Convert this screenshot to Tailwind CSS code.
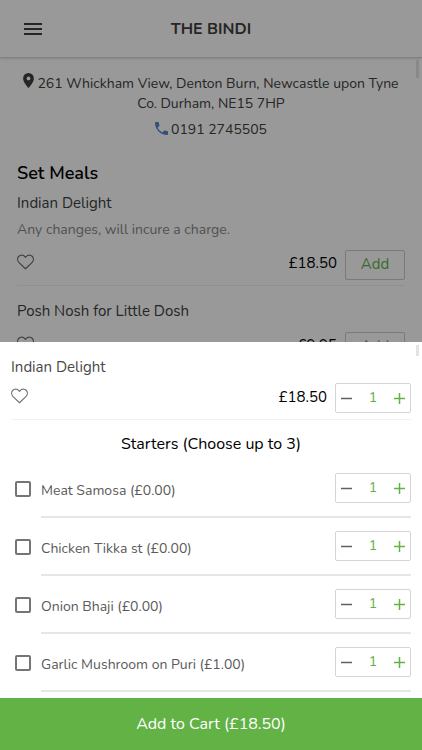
<!DOCTYPE html>
<html lang="en">
<head>
<meta charset="utf-8">
<meta name="viewport" content="width=device-width, initial-scale=1">
<title>The Bindi</title>
<script src="https://cdn.jsdelivr.net/npm/@tailwindcss/browser@4"></script>
</head>
<body class="bg-white">
<svg class="hidden" aria-hidden="true">
  <symbol id="heart" viewBox="0 0 18 16"><path d="M9 15.200 2.200 8.600C.3 6.700.2 3.900 1.700 2.200 3.500.2 6.700.2 8.300 2.200L9 3.100 9.700 2.200C11.300.2 14.500.2 16.300 2.200 17.800 3.900 17.700 6.700 15.800 8.600Z" fill="none" stroke="currentColor" stroke-width="1.300" stroke-linejoin="round"/></symbol>
  <symbol id="minus" viewBox="0 0 11 11"><path d="M0 5.500h11" stroke="currentColor" stroke-width="1.500"/></symbol>
  <symbol id="plus" viewBox="0 0 11 11"><path d="M0 5.500h11M5.500 0v11" stroke="currentColor" stroke-width="1.500"/></symbol>
</svg>
<div class="relative h-screen overflow-hidden font-['Nunito','Lato',sans-serif] text-[15px] text-[#404040]">
  <header class="grid h-[58px] grid-cols-[1fr_auto_1fr] items-center border-b border-[#d9d9d9] px-6 shadow-sm">
    <button type="button" aria-label="Menu" class="w-[18px]">
      <svg class="block h-3 w-[18px]" viewBox="0 0 18 12" fill="#404040"><path d="M0 0h18v2H0zM0 5h18v2H0zM0 10h18v2H0z"/></svg>
    </button>
    <h1 class="text-base font-bold">THE BINDI</h1>
  </header>
  <main class="px-[17px] pt-[15px]">
    <address class="-mx-1 text-center text-sm leading-5 not-italic">
      <p><svg class="mr-[3px] inline-block h-[15px] w-[11px] align-baseline" viewBox="0 0 11 15" fill="#404040"><path fill-rule="evenodd" d="M5.500 0A5.400 5.400 0 0 0 .1 5.400C.1 9.400 5.500 15 5.500 15s5.400-5.600 5.400-9.600A5.400 5.400 0 0 0 5.500 0Zm0 7.300a1.900 1.900 0 1 1 0-3.800 1.900 1.900 0 0 1 0 3.800Z"/></svg>261 Whickham View, Denton Burn, Newcastle upon Tyne<br>Co. Durham, NE15 7HP</p>
      <a href="tel:01912745505" class="mt-[6px] flex items-center justify-center gap-[3px]"><svg class="-mt-1 size-[13px]" viewBox="3 3 18 18" fill="#5787cf"><path d="M6.620 10.790c1.440 2.830 3.760 5.140 6.590 6.590l2.200-2.200c.27-.27.67-.36 1.020-.24 1.120.37 2.330.57 3.570.57.550 0 1 .45 1 1V20c0 .55-.45 1-1 1-9.390 0-17-7.610-17-17 0-.55.45-1 1-1h3.500c.55 0 1 .45 1 1 0 1.250.2 2.450.57 3.570.11.350.03.740-.25 1.020z"/></svg>0191 2745505</a>
    </address>
    <h2 class="mt-[21px] text-lg leading-6 font-semibold text-black">Set Meals</h2>
    <article class="border-b border-[#eee] pt-2 pb-[5px]">
      <h3 class="leading-5">Indian Delight</h3>
      <p class="mt-[7px] text-sm leading-5 text-[#888]">Any changes, will incure a charge.</p>
      <div class="mt-[10px] flex items-center">
        <button type="button" aria-label="Add Indian Delight to favourites" class="-mt-1.5 text-[#707070]"><svg class="block h-4 w-[17px]"><use href="#heart"/></svg></button>
        <span class="-mt-1 mr-2 ml-auto text-black">£18.50</span>
        <button type="button" class="h-[30px] w-[60px] rounded-xs border border-[#ccc] pb-0.5 text-[#62b246]">Add</button>
      </div>
    </article>
    <article class="pt-[15px]">
      <h3 class="leading-5">Posh Nosh for Little Dosh</h3>
      <div class="mt-[11px] flex items-center">
        <button type="button" aria-label="Add Posh Nosh to favourites" class="-mt-1.5 text-[#707070]"><svg class="block h-4 w-[17px]"><use href="#heart"/></svg></button>
        <span class="-mt-1 mr-2 ml-auto text-black">£9.95</span>
        <button type="button" class="h-[30px] w-[60px] rounded-xs border border-[#ccc] pb-0.5 text-[#62b246]">Add</button>
      </div>
    </article>
  </main>
  <div class="absolute top-[60px] right-[3px] h-[18px] w-[3px] bg-[#e4e4e4]"></div>
  <div class="absolute inset-0 bg-black/40"></div>

  <section role="dialog" aria-label="Indian Delight options" class="absolute inset-x-0 bottom-0 bg-white">
    <div class="absolute top-[3px] right-[3px] h-[11px] w-[3px] bg-[#e4e4e4]"></div>
    <div class="px-[11px] pt-[15px] pb-1.5">
      <h2 class="leading-5 text-[#484848]">Indian Delight</h2>
      <div class="mt-[6px] flex items-center border-b border-[#f3f3f3] pb-[6px]">
        <button type="button" aria-label="Add to favourites" class="-mt-1 text-[#777]"><svg class="block h-4 w-[17px]"><use href="#heart"/></svg></button>
        <span class="-mt-0.5 mr-2 ml-auto text-black">£18.50</span>
        <div class="flex h-[30px] w-[76px] items-center justify-between rounded-xs border border-[#d5d5d5] px-[5px] text-sm text-[#62b246]">
          <button type="button" aria-label="Decrease quantity" class="text-[#606060]"><svg class="block size-[11px]"><use href="#minus"/></svg></button><span>1</span><button type="button" aria-label="Increase quantity"><svg class="block size-[11px]"><use href="#plus"/></svg></button>
        </div>
      </div>
      <h3 class="pt-[14px] pb-[6px] text-center text-base leading-5 text-black">Starters (Choose up to 3)</h3>
      <ul class="text-sm text-[#5a5a5a]">
        <li class="flex h-[58px] items-center">
          <input id="samosa" type="checkbox" class="mr-[10px] ml-1 size-4 shrink-0 appearance-none rounded-xs border-2 border-[#757575] checked:bg-[#62b246]">
          <div class="flex h-full grow items-center border-b-2 border-[#e6e6e6]">
            <label for="samosa" class="grow pt-1.5">Meat Samosa (£0.00)</label>
            <div class="flex h-[30px] w-[76px] items-center justify-between rounded-xs border border-[#d5d5d5] px-[5px] text-[#62b246]">
              <button type="button" aria-label="Decrease Meat Samosa" class="text-[#606060]"><svg class="block size-[11px]"><use href="#minus"/></svg></button><span>1</span><button type="button" aria-label="Increase Meat Samosa"><svg class="block size-[11px]"><use href="#plus"/></svg></button>
            </div>
          </div>
        </li>
        <li class="flex h-[58px] items-center">
          <input id="tikka" type="checkbox" class="mr-[10px] ml-1 size-4 shrink-0 appearance-none rounded-xs border-2 border-[#757575] checked:bg-[#62b246]">
          <div class="flex h-full grow items-center border-b-2 border-[#e6e6e6]">
            <label for="tikka" class="grow pt-1.5">Chicken Tikka st (£0.00)</label>
            <div class="flex h-[30px] w-[76px] items-center justify-between rounded-xs border border-[#d5d5d5] px-[5px] text-[#62b246]">
              <button type="button" aria-label="Decrease Chicken Tikka" class="text-[#606060]"><svg class="block size-[11px]"><use href="#minus"/></svg></button><span>1</span><button type="button" aria-label="Increase Chicken Tikka"><svg class="block size-[11px]"><use href="#plus"/></svg></button>
            </div>
          </div>
        </li>
        <li class="flex h-[58px] items-center">
          <input id="bhaji" type="checkbox" class="mr-[10px] ml-1 size-4 shrink-0 appearance-none rounded-xs border-2 border-[#757575] checked:bg-[#62b246]">
          <div class="flex h-full grow items-center border-b-2 border-[#e6e6e6]">
            <label for="bhaji" class="grow pt-1.5">Onion Bhaji (£0.00)</label>
            <div class="flex h-[30px] w-[76px] items-center justify-between rounded-xs border border-[#d5d5d5] px-[5px] text-[#62b246]">
              <button type="button" aria-label="Decrease Onion Bhaji" class="text-[#606060]"><svg class="block size-[11px]"><use href="#minus"/></svg></button><span>1</span><button type="button" aria-label="Increase Onion Bhaji"><svg class="block size-[11px]"><use href="#plus"/></svg></button>
            </div>
          </div>
        </li>
        <li class="flex h-[58px] items-center">
          <input id="mushroom" type="checkbox" class="mr-[10px] ml-1 size-4 shrink-0 appearance-none rounded-xs border-2 border-[#757575] checked:bg-[#62b246]">
          <div class="flex h-full grow items-center border-b-2 border-[#e6e6e6]">
            <label for="mushroom" class="grow pt-1.5">Garlic Mushroom on Puri (£1.00)</label>
            <div class="flex h-[30px] w-[76px] items-center justify-between rounded-xs border border-[#d5d5d5] px-[5px] text-[#62b246]">
              <button type="button" aria-label="Decrease Garlic Mushroom" class="text-[#606060]"><svg class="block size-[11px]"><use href="#minus"/></svg></button><span>1</span><button type="button" aria-label="Increase Garlic Mushroom"><svg class="block size-[11px]"><use href="#plus"/></svg></button>
            </div>
          </div>
        </li>
      </ul>
    </div>
    <button type="button" class="block h-[52px] w-full bg-[#62b246] text-base text-white">Add to Cart (£18.50)</button>
  </section>
</div>
</body>
</html>
